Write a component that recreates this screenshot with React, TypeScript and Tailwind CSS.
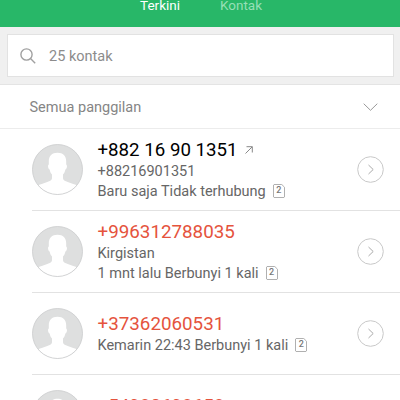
import React from 'react';

interface Call {
  number: string;
  subtitle?: string;
  detail: string;
  outgoing?: boolean;
}

const CALLS: Call[] = [
  { number: '+882 16 90 1351', subtitle: '+88216901351', detail: 'Baru saja Tidak terhubung', outgoing: true },
  { number: '+996312788035', subtitle: 'Kirgistan', detail: '1 mnt lalu Berbunyi 1 kali' },
  { number: '+37362060531', detail: 'Kemarin 22:43 Berbunyi 1 kali' },
  { number: '+54980698658', detail: 'Kemarin 21:10 Berbunyi 1 kali' },
];

const Avatar: React.FC = () => (
  <svg viewBox="0 0 52 52" className="h-[52px] w-[52px] shrink-0">
    <defs>
      <clipPath id="avatar-clip">
        <circle cx="25.5" cy="25.5" r="24.8" />
      </clipPath>
    </defs>
    <circle cx="25.5" cy="25.5" r="25" fill="#dedfdf" />
    <path
      clipPath="url(#avatar-clip)"
      fill="#fff"
      d="M25.5 8.8c-5.6 0-8.7 3.3-8.7 8.6v3c-1.2.4-1 4.4.8 5 .5 2.4 1.2 3.7 2.4 5V34c0 1.4-.8 2.3-2.3 2.9C12.5 39.2 8 40 4.5 42V52h42V42C43 40 38.5 39.2 33.3 36.9 31.8 36.3 31 35.4 31 34v-3.6c1.2-1.3 1.9-2.6 2.4-5 1.8-.6 2-4.6.8-5v-3c0-5.3-3.1-8.6-8.7-8.6z"
    />
    <circle cx="25.5" cy="25.5" r="25" fill="none" stroke="#c9cacb" strokeWidth="0.8" />
  </svg>
);

const SimBadge: React.FC = () => (
  <span className="relative mb-[2px] ml-[7px] flex h-[14px] w-[12px] items-center justify-center text-[9px] font-medium leading-none text-[#777]">
    <svg viewBox="0 0 12 14" className="absolute inset-0 h-[14px] w-[12px]" fill="none" stroke="#b0b0b0">
      <path d="M1 .5h7.8l2.7 2.7v9.8l-.5.5H1l-.5-.5V1z" />
    </svg>
    2
  </span>
);

const CallRow: React.FC<{ call: Call }> = ({ call }) => (
  <li className="flex h-[82px] shrink-0 pl-[32px]">
    <div className="flex h-full w-full items-center border-b border-[#e2e2e2] pr-[16px]">
      <Avatar />
      <div className="ml-[13.5px] min-w-0 flex-1 whitespace-nowrap pt-px text-[14.5px] leading-[20px] text-[#666]">
        <div className="mb-px flex items-center">
          <span
            className={
              call.outgoing
                ? 'text-[18.7px] leading-[22px] text-black'
                : 'text-[18.8px] leading-[22px] text-[#e5533d]'
            }
          >
            {call.number}
          </span>
          {call.outgoing && (
            <svg viewBox="0 0 8 8" className="ml-[7px] h-[8px] w-[8px]" fill="none" stroke="#888">
              <path d="M.5 7.5L7.2.8M1.5.7h5.8v5.8" />
            </svg>
          )}
        </div>
        {call.subtitle && <div>{call.subtitle}</div>}
        <div className="flex items-center">
          <span>{call.detail}</span>
          <SimBadge />
        </div>
      </div>
      <svg viewBox="0 0 27 27" className="h-[27px] w-[27px] shrink-0" fill="none">
        <circle cx="13.5" cy="13.5" r="12.8" stroke="#c8c8c8" />
        <path d="M11.5 9l4.7 4.5-4.7 4.5" stroke="#aaa" />
      </svg>
    </div>
  </li>
);

export default function App() {
  return (
    <div className="flex h-[400px] w-[400px] flex-col overflow-hidden bg-white font-['Roboto',sans-serif]">
      <nav className="flex h-[27px] shrink-0 bg-[#28b768] pl-[140px] text-[13.5px] leading-[11px] text-white">
        <span className="w-[80px]">Terkini</span>
        <span className="text-[#96dfb6]">Kontak</span>
      </nav>

      <div className="h-[58px] shrink-0 border-b border-[#e4e4e4] bg-[#f0f0f0] pl-[7px] pr-[6px] pt-[7px]">
        <div className="flex h-[43px] items-center border border-[#e2e2e2] bg-white pl-[12px] text-[14.5px] text-[#8c8c8c]">
          <svg viewBox="0 0 16 16" className="h-[16px] w-[16px]" fill="none" stroke="#a0a0a0" strokeWidth="1.4">
            <circle cx="6.5" cy="6.5" r="5.6" />
            <path d="M10.5 10.5l4.7 4.7" />
          </svg>
          <span className="ml-[13px] pt-[2px]">25 kontak</span>
        </div>
      </div>

      <div className="flex h-[44px] shrink-0 items-center justify-between border-b border-[#ececec] pl-[29.5px] pr-[22px] text-[14.5px] text-[#858585]">
        <span className="pt-[2px]">Semua panggilan</span>
        <svg viewBox="0 0 15 8" className="h-[8px] w-[15px]" fill="none" stroke="#999">
          <path d="M.7.7l6.8 6.6L14.3.7" />
        </svg>
      </div>

      <ul className="flex flex-col">
        {CALLS.map((call) => (
          <CallRow key={call.number} call={call} />
        ))}
      </ul>
    </div>
  );
}
